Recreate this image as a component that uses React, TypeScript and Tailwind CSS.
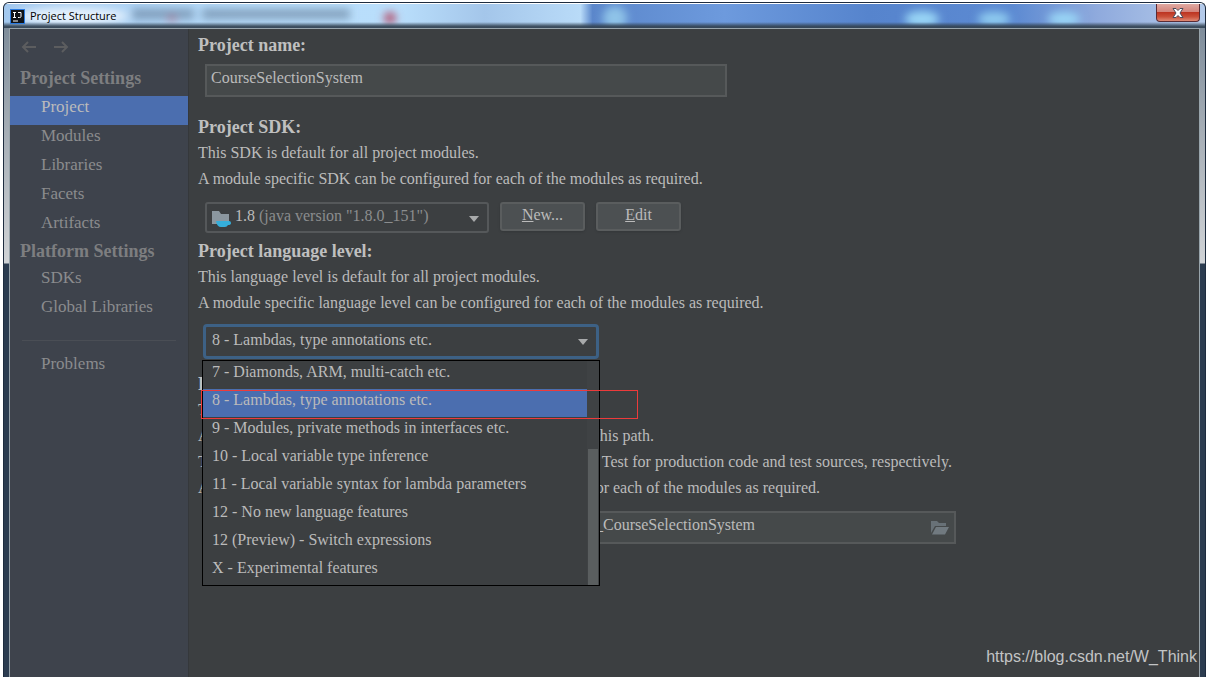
import { ReactNode } from 'react';

const levels = [
  '7 - Diamonds, ARM, multi-catch etc.',
  '8 - Lambdas, type annotations etc.',
  '9 - Modules, private methods in interfaces etc.',
  '10 - Local variable type inference',
  '11 - Local variable syntax for lambda parameters',
  '12 - No new language features',
  '12 (Preview) - Switch expressions',
  'X - Experimental features',
];

const current = '8 - Lambdas, type annotations etc.';

function NavItem({ children, active = false }: { children: string; active?: boolean }) {
  return (
    <a
      href="#"
      className={
        active
          ? 'block h-[29px] bg-[#4b6eaf] pl-[31px] leading-[22px] text-[#bbbbbb]'
          : 'block h-[29px] pl-[31px] leading-[22px] text-[#8b8c8e]'
      }
    >
      {children}
    </a>
  );
}

function NavTitle({ children }: { children: string }) {
  return <h2 className="h-[28px] pl-[10px] text-[18px] leading-6 font-bold text-[#7d7e80]">{children}</h2>;
}

function Arrow({ flip = false }: { flip?: boolean }) {
  return (
    <svg
      width="16"
      height="12"
      viewBox="0 0 16 12"
      fill="none"
      stroke="#5c5d5f"
      strokeWidth="2"
      className={flip ? 'rotate-180' : ''}
    >
      <path d="M15 6H2M7 1 2 6l5 5" />
    </svg>
  );
}

function Line({ children }: { children: ReactNode }) {
  return <p className="h-[26px] leading-[26px] whitespace-nowrap">{children}</p>;
}

function Title({ children, htmlFor }: { children: string; htmlFor: string }) {
  return (
    <label htmlFor={htmlFor} className="block h-[26px] text-[18px] leading-[26px] font-bold text-[#bfbfbf]">
      {children}
    </label>
  );
}

function Caret() {
  return (
    <svg width="10" height="6" viewBox="0 0 10 6" className="pointer-events-none absolute top-3 right-2">
      <path d="M0 0h10L5 6z" fill="#a8aaab" />
    </svg>
  );
}

function Button({ children }: { children: ReactNode }) {
  return (
    <button className="h-[29px] w-[85px] rounded-[3px] border-2 border-[#5a5d5e] bg-[#4c5052] pb-[3px] leading-[22px] shadow-sm">
      {children}
    </button>
  );
}

export default function App() {
  return (
    <div className="min-h-screen bg-white pt-[2px] pr-[1px] pl-[3px] font-['Liberation_Serif',serif] text-[16px] text-[#bbbbbb]">
      <div className="flex min-h-[calc(100vh-2px)] flex-col overflow-hidden rounded-t-md border border-b-0 border-[#1e2c3f] bg-[#34404f]">
        <header className="relative flex h-[25px] items-start justify-between overflow-hidden border-t border-white bg-[linear-gradient(90deg,#a3c8ee_0%,#b8ddfb_20%,#b9defb_33%,#a4c6ea_40%,#b9dbf8_48%,#5b87cb_49%,#6d9add_60%,#5684cd_72%,#5c8ad2_84%,#8faadd_91%,#b5cbea_100%)]">
          <svg className="absolute inset-0 h-full w-full" aria-hidden="true">
            <defs>
              <filter id="soft" x="-30%" y="-80%" width="160%" height="260%">
                <feGaussianBlur stdDeviation="4" />
              </filter>
              <linearGradient id="shade" x1="0" y1="0" x2="0" y2="1">
                <stop offset="0" stopColor="#334353" stopOpacity="0" />
                <stop offset="0.6" stopColor="#334353" stopOpacity="0.9" />
                <stop offset="1" stopColor="#334353" />
              </linearGradient>
            </defs>
            <g filter="url(#soft)">
              <rect x="128" y="5" width="62" height="10" fill="#5e7693" opacity="0.6" />
              <rect x="198" y="5" width="148" height="10" fill="#5e7693" opacity="0.6" />
              <circle cx="386" cy="14" r="6" fill="#b3506c" />
              <circle cx="168" cy="15" r="4" fill="#b3506c" opacity="0.5" />
              <circle cx="611" cy="14" r="12" fill="#8fc3e8" />
              <ellipse cx="918" cy="15" rx="17" ry="8" fill="#99d6f6" />
              <ellipse cx="990" cy="15" rx="16" ry="7" fill="#8fccf0" />
              <ellipse cx="1060" cy="15" rx="16" ry="7" fill="#99d6f6" />
              <ellipse cx="68" cy="12" rx="56" ry="9" fill="#e5f1fc" />
            </g>
            <rect x="0" y="18" width="100%" height="7" fill="url(#shade)" />
          </svg>
          <div className="relative flex h-6 items-center gap-[5px] pl-[6px]">
            <svg width="15" height="15" viewBox="0 0 15 15" aria-hidden="true">
              <rect width="15" height="15" fill="#2b7be0" />
              <rect x="1" y="1" width="13" height="13" fill="#101318" />
              <path d="M3 3.500h3M4.500 3.500v5M3 8.500h3M8 3.500h3v4q0 1-1.500 1H8" stroke="#fff" fill="none" />
              <path d="M3 12h5" stroke="#fff" />
            </svg>
            <h1 className="font-['Open_Sans','Noto_Sans',sans-serif] text-[11px] text-black">Project Structure</h1>
          </div>
          <button
            aria-label="Close"
            className="relative mr-[5px] flex h-[18px] w-11 items-center justify-center rounded-b border border-t-0 border-[#5a2c35] bg-[linear-gradient(#e0a9a2_0%,#d4847b_45%,#bd3522_50%,#ca5039_75%,#e08b76_100%)]"
          >
            <svg width="12" height="10" viewBox="0 0 12 10" aria-hidden="true">
              <path d="M1 .5h3l2 2 2-2h3L8 5l3 4.500H8l-2-2-2 2H1L4 5z" fill="#fff" stroke="#4c4b5a" />
            </svg>
          </button>
        </header>

        <div className="flex grow bg-[linear-gradient(#7f8d9b_0px,#a5adb5_100px,#d0d3d6_235px,#2c3c50_236px)] px-[5px]">
          <div className="flex grow border border-b-0 border-[#98a4ab]">
            <nav className="w-[179px] shrink-0 border-r border-[#35383b] bg-[#3e434c] text-[17px]">
              <div className="mb-[2px] flex h-[35px] items-center gap-4 pl-[11px]">
                <Arrow />
                <Arrow flip />
              </div>
              <NavTitle>Project Settings</NavTitle>
              <div className="-mb-[2px] pt-[2px]">
                <NavItem active>Project</NavItem>
                <NavItem>Modules</NavItem>
                <NavItem>Libraries</NavItem>
                <NavItem>Facets</NavItem>
                <NavItem>Artifacts</NavItem>
              </div>
              <NavTitle>Platform Settings</NavTitle>
              <NavItem>SDKs</NavItem>
              <NavItem>Global Libraries</NavItem>
              <hr className="mx-3 mt-[15px] mb-3 border-[#4a4e55]" />
              <NavItem>Problems</NavItem>
            </nav>

            <main className="flex grow flex-col bg-[#3c3f41] pt-[3px] pl-[9px]">
              <Title htmlFor="name">Project name:</Title>
              <input
                id="name"
                defaultValue="CourseSelectionSystem"
                className="mt-[6px] ml-[7px] h-[33px] w-[522px] border-2 border-[#56595a] bg-[#45494a] px-1 pb-[6px]"
              />

              <div className="mt-[17px]">
                <Title htmlFor="sdk">Project SDK:</Title>
                <Line>This SDK is default for all project modules.</Line>
                <Line>A module specific SDK can be configured for each of the modules as required.</Line>
              </div>
              <div className="mt-[10px] ml-[7px] flex gap-[11px]">
                <button
                  id="sdk"
                  className="relative flex h-[31px] w-[284px] items-center gap-1 rounded-[3px] border-2 border-[#55585a] pb-1 pl-[5px]"
                >
                  <svg width="19" height="18" viewBox="0 0 19 18" className="mt-1" aria-hidden="true">
                    <path d="M0 2h7l2 3h8v10H0z" fill="#8b979f" />
                    <path d="M4 12h13q2 0 2 2t-3 2q-1 2-3 2H9q-4 0-5-6z" fill="#35aeda" />
                  </svg>
                  <span>
                    1.8 <span className="text-[#8b8d8e]">(java version "1.8.0_151")</span>
                  </span>
                  <Caret />
                </button>
                <Button>
                  <u>N</u>ew...
                </Button>
                <Button>
                  <u>E</u>dit
                </Button>
              </div>

              <div className="mt-[5px]">
                <Title htmlFor="level">Project language level:</Title>
                <Line>This language level is default for all project modules.</Line>
                <Line>A module specific language level can be configured for each of the modules as required.</Line>
              </div>
              <div className="relative mt-2 ml-[5px] w-[396px]">
                <button
                  id="level"
                  aria-expanded="true"
                  className="relative block h-[35px] w-full rounded-[4px] border-[3px] border-[#3d6185] pb-1 pl-[6px] text-left"
                >
                  {current}
                  <Caret />
                </button>
                <div className="absolute top-9 -left-px z-10 flex w-[398px] border border-black bg-[#3c3f41]">
                  <ul role="listbox" aria-label="Project language level" className="grow">
                    {levels.map((level) => (
                      <li
                        key={level}
                        role="option"
                        aria-selected={level === current}
                        className={
                          level === current
                            ? 'h-[28px] bg-[#4b6eaf] pl-[9px] leading-[22px]'
                            : 'h-[28px] pl-[9px] leading-[22px]'
                        }
                      >
                        {level}
                      </li>
                    ))}
                  </ul>
                  <div className="flex w-3 flex-col justify-end bg-[#3f4244]">
                    <div className="mr-px ml-px h-[136px] bg-[#5a5e5f]" />
                  </div>
                </div>
                <div className="pointer-events-none absolute top-[66px] -left-[2px] z-20 h-[29px] w-[437px] border border-[#ed3b3b]" />
              </div>

              <div className="mt-[12px]">
                <Title htmlFor="output">Project compiler output:</Title>
                <Line>This path is used to store all project compilation results.</Line>
                <p className="flex h-[26px] w-[456px] justify-between leading-[26px] whitespace-nowrap">
                  <span>A directory corresponding to each module is created under</span>
                  <span>this path.</span>
                </p>
                <p className="flex h-[26px] w-[754px] justify-between leading-[26px] whitespace-nowrap">
                  <span>This directory contains two subdirectories: Production and</span>
                  <span>Test for production code and test sources, respectively.</span>
                </p>
                <p className="flex h-[26px] w-[622px] justify-between leading-[26px] whitespace-nowrap">
                  <span>A module specific compiler output path can be configured</span>
                  <span>for each of the modules as required.</span>
                </p>
              </div>
              <div className="mt-[10px] ml-[7px] flex h-[33px] w-[751px] items-center border-2 border-[#56595a] bg-[#45494a]">
                <input
                  id="output"
                  defaultValue="_CourseSelectionSystem"
                  className="min-w-0 grow bg-transparent pr-[175px] pb-[6px] text-right"
                />
                <button aria-label="Browse" className="mr-[5px] ml-px">
                  <svg width="18" height="14" viewBox="0 0 18 14" aria-hidden="true">
                    <path d="M0 0h6l2 2h7v3H4L0 12z" fill="#687177" />
                    <path d="M5 6h13l-4 7.500H1z" fill="#717a80" />
                  </svg>
                </button>
              </div>
              <p className="mt-auto self-end pr-[2px] pb-2 font-['Liberation_Sans',sans-serif] text-[16px] leading-6 text-[#c3c4c5]">
                https://blog.csdn.net/W_Think
              </p>
            </main>
          </div>
        </div>
      </div>
    </div>
  );
}
